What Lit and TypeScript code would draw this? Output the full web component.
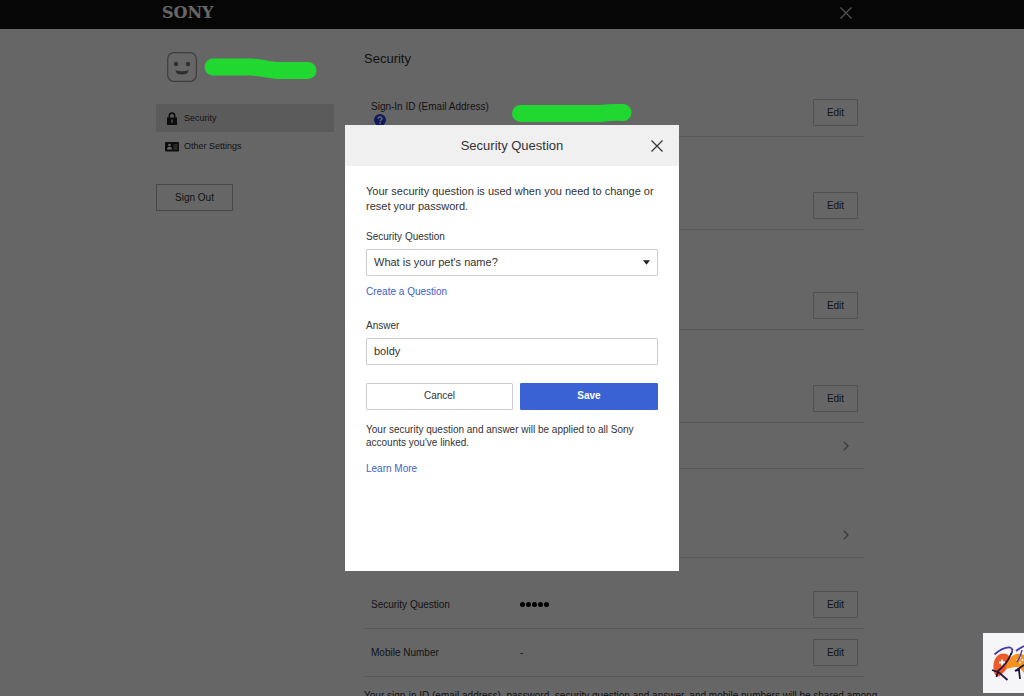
import { LitElement, html, css, svg, nothing } from "lit";
import { customElement, property } from "lit/decorators.js";

const closeIcon = svg`<svg class="x" viewBox="0 0 12 12" aria-hidden="true"><path d="M.5.5l11 11M11.5.5l-11 11" fill="none" stroke="currentColor" stroke-width="1.2"/></svg>`;

@customElement("setting-row")
class SettingRow extends LitElement {
  @property() label = "";
  @property() value = "";
  @property() action = "edit";
  @property({ type: Boolean }) help = false;
  @property({ type: Boolean }) redacted = false;

  static styles = css`
    :host {
      display: flex;
      align-items: center;
      gap: 8px;
      min-height: 47px;
      padding: 0 6px 0 7px;
      border-bottom: 1px solid #dedede;
      font-size: 10px;
      line-height: 13px;
    }
    .label { flex: 0 0 141px; }
    .value { flex: 1; }
    .dots { display: flex; gap: 1px; }
    .dot { width: 5px; height: 5px; border-radius: 50%; background: #000; }
    .help { display: block; width: 12px; height: 12px; margin: 1px 0 0 3px; }
    .mark { display: block; width: 122px; height: 20px; margin-left: -9px; position: relative; z-index: 3; }
    button {
      width: 45px;
      height: 27px;
      padding: 0;
      border: 1px solid #c8c8c8;
      border-radius: 1px;
      background: none;
      color: #333;
      font: inherit;
    }
    .more { width: 24px; border: 0; color: #999; }
    .chevron { display: block; margin: 0 auto; width: 6px; height: 10px; }
  `;

  render() {
    return html`
      <div class="label">
        ${this.label}
        ${this.help
          ? html`<svg class="help" viewBox="0 0 12 12" aria-hidden="true">
              <circle cx="6" cy="6" r="6" fill="#2a45f0" />
              <path d="M4.2 4.7c0-2.4 3.7-2.3 3.7-.1 0 1.3-1.8 1.3-1.8 2.7" fill="none" stroke="#fff" stroke-width="1.4" />
              <circle cx="6.1" cy="9" r=".9" fill="#fff" />
            </svg>`
          : nothing}
      </div>
      <div class="value">
        ${this.redacted
          ? html`<svg class="mark" viewBox="0 0 122 20" aria-hidden="true">
              <path d="M9.500 10.500H90Q100 9 112 9.500" fill="none" stroke="#20d830" stroke-width="17" stroke-linecap="round" />
            </svg>`
          : this.value === "hidden"
            ? html`<div class="dots">${[0, 1, 2, 3, 4].map(() => html`<span class="dot"></span>`)}</div>`
            : this.value}
      </div>
      ${this.action === "edit"
        ? html`<button type="button">Edit</button>`
        : html`<button type="button" class="more" aria-label="Open">
            <svg class="chevron" viewBox="0 0 6 10"><path d="M.8.8L5 5 .8 9.200" fill="none" stroke="currentColor" stroke-width="1.400" /></svg>
          </button>`}
    `;
  }
}

@customElement("question-dialog")
class QuestionDialog extends LitElement {
  static styles = css`
    :host {
      position: fixed;
      inset: 0;
      z-index: 2;
      display: flex;
      align-items: center;
      justify-content: center;
      background: rgba(0, 0, 0, 0.6);
      color: #333;
      font-size: 10px;
      line-height: 13px;
    }
    .dialog { width: 334px; max-width: 100%; min-height: 446px; background: #fff; }
    .head {
      display: grid;
      grid-template-columns: 32px 1fr 32px;
      align-items: center;
      height: 41px;
      padding: 0 6px;
      background: #f0f0f0;
    }
    h2 { grid-column: 2; margin: 0; text-align: center; font-size: 13px; line-height: 18px; font-weight: 400; }
    .close { display: grid; place-items: center; width: 32px; height: 32px; padding: 0; border: 0; background: none; color: #333; }
    .x { display: block; width: 12px; height: 12px; }
    form { padding: 18px 21px; }
    p { margin: 0; }
    .intro { font-size: 11px; line-height: 15px; margin-bottom: 16px; }
    label { display: block; margin-bottom: 6px; }
    .wrap { display: grid; align-items: center; }
    .wrap > * { grid-area: 1 / 1; }
    .arrow { justify-self: end; width: 7px; height: 5px; margin-right: 8px; pointer-events: none; }
    select, input {
      appearance: none;
      box-sizing: border-box;
      width: 100%;
      height: 27px;
      margin: 0;
      padding: 0 7px 2px;
      border: 1px solid #ccc;
      border-radius: 1px;
      background: #fff;
      color: #333;
      font-family: inherit;
      font-size: 11px;
    }
    a { display: table; color: #3c5fd0; text-decoration: none; }
    .create { margin: 9px 0 21px; }
    .actions { display: grid; grid-template-columns: 147fr 138fr; gap: 7px; margin: 18px 0 13px; }
    .actions button {
      height: 27px;
      padding: 0 0 2px;
      border: 1px solid #ccc;
      border-radius: 1px;
      background: #fff;
      color: #333;
      font: inherit;
    }
    .actions .save { border-color: #3a62d4; background: #3a62d4; color: #fff; font-weight: 700; }
    .more { margin-top: 13px; }
  `;

  render() {
    return html`
      <section class="dialog" role="dialog" aria-labelledby="title">
        <div class="head">
          <h2 id="title">Security Question</h2>
          <button class="close" type="button" aria-label="Close">${closeIcon}</button>
        </div>
        <form>
          <p class="intro">Your security question is used when you need to change or reset your password.</p>
          <label for="question">Security Question</label>
          <div class="wrap">
            <select id="question"><option>What is your pet's name?</option></select>
            <svg class="arrow" viewBox="0 0 7 5" aria-hidden="true"><path d="M0 .3h7L3.500 4.800z" fill="#222" /></svg>
          </div>
          <a class="create" href="#create">Create a Question</a>
          <label for="answer">Answer</label>
          <input id="answer" type="text" value="boldy" />
          <div class="actions">
            <button type="button">Cancel</button>
            <button type="button" class="save">Save</button>
          </div>
          <p>Your security question and answer will be applied to all Sony accounts you've linked.</p>
          <a class="more" href="#more">Learn More</a>
        </form>
      </section>
    `;
  }
}

@customElement("app-root")
class AppRoot extends LitElement {
  static styles = css`
    :host {
      display: block;
      height: 100vh;
      overflow: hidden;
      background: #fff;
      color: #333;
      font-family: "Liberation Sans", Arial, sans-serif;
      font-size: 10px;
      line-height: 13px;
    }
    .bar { background: #101010; padding-right: 4px; }
    .bar-in, .page { max-width: 708px; margin: 0 auto; }
    .bar-in {
      display: flex;
      justify-content: space-between;
      align-items: flex-start;
      box-sizing: border-box;
      height: 29px;
      padding: 5px 4px 0 6px;
      color: #fff;
    }
    .brand { font: 700 16px/16px "DejaVu Serif", serif; }
    .bar button { display: grid; place-items: center; width: 28px; height: 16px; padding: 0; border: 0; background: none; color: #ccc; }
    .x { display: block; width: 12px; height: 12px; }
    .shell { padding-right: 4px; }
    .page { display: grid; grid-template-columns: 178px minmax(0, 1fr); gap: 30px; }
    .user { display: flex; align-items: center; gap: 7px; height: 75px; padding-left: 11px; }
    .face { width: 30px; height: 30px; flex: none; }
    .mark { width: 113px; height: 24px; margin-top: 4px; position: relative; z-index: 3; flex: none; }
    nav a {
      display: flex;
      align-items: center;
      gap: 5px;
      height: 28px;
      padding-left: 9px;
      color: #333;
      text-decoration: none;
      font-size: 9px;
    }
    nav .on { background: #e4e4e4; }
    nav svg { width: 14px; height: 13px; }
    .out {
      display: block;
      width: 77px;
      height: 27px;
      margin-top: 24px;
      padding: 0;
      border: 1px solid #b4b4b4;
      background: none;
      color: #333;
      font: inherit;
    }
    h1 { margin: 0; padding: 21px 0 21px; font-size: 13px; line-height: 18px; font-weight: 400; }
    .gap { margin-top: 45px; }
    .gap-wide { margin-top: 52px; }
    .gap-small { margin-top: 23px; }
    .link-row { min-height: 45px; }
    .gap-link { margin-top: 43px; }
    .note { margin: 12px 0 0; white-space: nowrap; }
    .badge { position: fixed; right: 0; bottom: 3px; z-index: 3; width: 41px; height: 60px; }
  `;

  render() {
    return html`
      <header class="bar">
        <div class="bar-in">
          <span class="brand">SONY</span>
          <button type="button" aria-label="Close">${closeIcon}</button>
        </div>
      </header>
      <div class="shell">
        <div class="page">
          <aside>
            <div class="user">
              <svg class="face" viewBox="0 0 30 30" aria-hidden="true">
                <rect x=".7" y=".7" width="28.600" height="28.600" rx="6" fill="none" stroke="#999" stroke-width="1.200" />
                <circle cx="9" cy="12" r="2.200" fill="#777" />
                <circle cx="21" cy="12" r="2.200" fill="#777" />
                <path d="M8.500 18q6.500 2.600 13 0 0 4.500-6.500 4.500T8.500 18z" fill="#777" />
              </svg>
              <svg class="mark" viewBox="0 0 113 24" aria-hidden="true">
                <path d="M9 10H46C56 10 64 13 74 13.500H104" fill="none" stroke="#20d830" stroke-width="17" stroke-linecap="round" />
              </svg>
            </div>
            <nav>
              <a class="on" href="#security">
                <svg viewBox="0 0 14 13" aria-hidden="true">
                  <path d="M4.300 6V3.800a2.700 2.700 0 0 1 5.400 0V6" fill="none" stroke="#222" stroke-width="1.600" />
                  <path d="M2 5.500h10V13H2z" fill="#222" />
                  <path d="M7 7.500v3" stroke="#ddd" stroke-width="1.400" />
                </svg>
                Security
              </a>
              <a href="#other">
                <svg viewBox="0 0 14 13" aria-hidden="true">
                  <rect y="2" width="14" height="9.500" rx="1" fill="#222" />
                  <circle cx="4.500" cy="5" r="1.300" fill="#fff" />
                  <path d="M2 9.500q0-2.700 2.500-2.700T7 9.500z" fill="#fff" />
                  <path d="M8.500 5h4M8.500 7h4M8.500 9h4" stroke="#bbb" stroke-width=".9" />
                </svg>
                Other Settings
              </a>
            </nav>
            <button class="out" type="button">Sign Out</button>
          </aside>
          <main>
            <h1>Security</h1>
            <setting-row label="Sign-In ID (Email Address)" help redacted></setting-row>
            <setting-row class="gap"></setting-row>
            <setting-row class="gap-wide"></setting-row>
            <setting-row class="gap"></setting-row>
            <setting-row class="link-row" action="open"></setting-row>
            <setting-row class="link-row gap-link" action="open"></setting-row>
            <setting-row class="gap-small" label="Security Question" value="hidden"></setting-row>
            <setting-row label="Mobile Number" value="-"></setting-row>
            <p class="note">Your sign-in ID (email address), password, security question and answer, and mobile numbers will be shared among</p>
          </main>
        </div>
      </div>
      <question-dialog></question-dialog>
      <svg class="badge" viewBox="0 0 41 60" aria-hidden="true">
        <rect width="41" height="60" fill="#f6f5f8" />
        <path d="M12 42C8 31 12 21 20 20.500c8 0 9 8 5 14q-4 5-9 9z" fill="#ee5a28" />
        <path d="M23 36q1-12 10-15 4-1 8 1v18q-4-7-9-6t-9 2z" fill="#f6921e" />
        <path d="M19 26.500v6M16 29.500h6" stroke="#fff" stroke-width="1.800" />
        <g fill="#fff"><circle cx="37" cy="24.500" r="1" /><circle cx="34.500" cy="27" r="1" /><circle cx="39.500" cy="27" r="1" /><circle cx="37" cy="29.500" r="1" /></g>
        <path d="M11.500 21.500Q20 14 27 14.500q4 1 1 7M33 18q4-3 8-5" fill="none" stroke="#4938a8" stroke-width="1.800" />
        <path d="M28.500 20Q24 31 15 38l-1.500 6M9 37l7 2.500 8.500 7.500M41 32q-4 3-9 6l4-1 1 9" fill="none" stroke="#1d1440" stroke-width="1.800" />
        <path d="M39 17q-1 6-5 12" fill="none" stroke="#4938a8" stroke-width="1.400" />
      </svg>
    `;
  }
}
